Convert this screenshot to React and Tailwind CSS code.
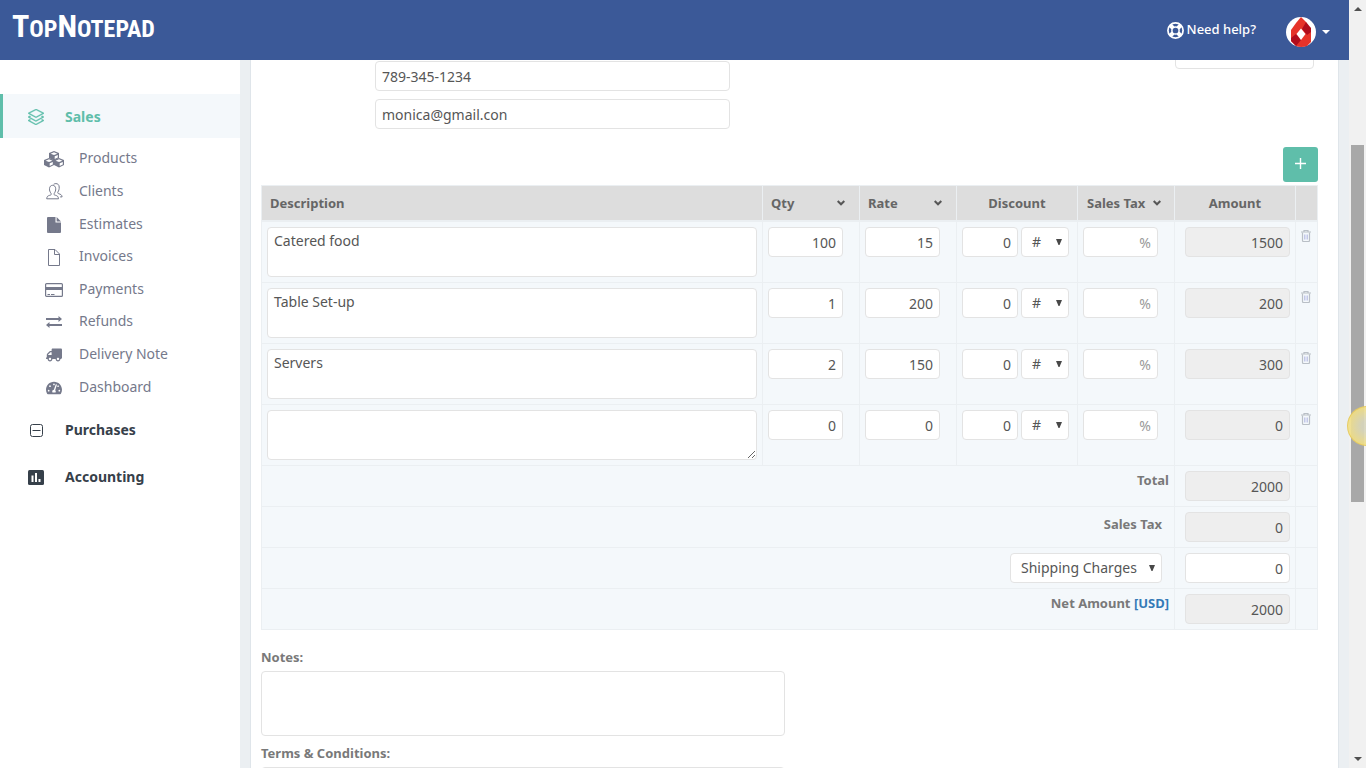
import { FaTruck, FaTachometerAlt } from 'react-icons/fa';
import { SlLayers } from 'react-icons/sl';

const field =
  'block h-[30px] rounded border border-[#e3e3e3] bg-white px-1.5 text-sm text-[#565656] outline-none placeholder:text-[#999]';
const cell = 'border-r border-b border-[#ebeff2] p-[5px] align-top';
const amountCell = 'border-r border-b border-[#ebeff2] py-[5px] pr-[5px] pl-2.5 align-top';
const headCell = 'border-r border-b-2 border-[#ebeff2] px-2 align-middle font-bold';

function CubesIcon() {
  return (
    <svg width="20" height="17" viewBox="0 0 20 17">
      <g fill="currentColor">
        <path d="m10 0 5 2v5l-5 2.500L5 7V2z" />
        <path d="m5 7 5 2v5l-5 2.500L0 14V9z" />
        <path d="m15 7 5 2v5l-5 2.500L10 14V9z" />
      </g>
      <g fill="#fff">
        <path d="m10 1.300 3.400 1.400L10 4 6.600 2.700z" />
        <path d="m5 8.300 3.400 1.400L5 11 1.600 9.700z" />
        <path d="m15 8.300 3.400 1.400L15 11l-3.400-1.300z" />
        <path d="m10.700 5.200 3.100-1.300v2.500l-3.100 1.600z" />
        <path d="m5.700 12.200 3.100-1.300v2.500L5.700 15z" />
        <path d="m15.700 12.200 3.100-1.300v2.500L15.700 15z" />
      </g>
    </svg>
  );
}

function FileIcon() {
  return (
    <svg width="14" height="16" viewBox="0 0 14 16" fill="currentColor">
      <path d="M1 0h7.500v5.500H14V15q0 1-1 1H1q-1 0-1-1V1q0-1 1-1z" />
      <path d="M9.600 0 14 4.400H9.600z" />
    </svg>
  );
}

function UsersIcon() {
  return (
    <svg width="17" height="17" viewBox="0 0 17 17" fill="none" stroke="currentColor" strokeWidth="1">
      <path d="M.7 15.800c.2-2.500 1.200-3 3-3.500 1.500-.3 1.900-.9 1.400-1.800C3.900 8.800 3.400 7.400 3.500 5.700c.1-2.200 1.400-3.400 3.100-3.400s3 1.200 3.100 3.400c.1 1.700-.4 3.100-1.500 4.800-.5.900-.1 1.500 1.300 1.800 1.800.500 2.800 1 3 3.500z" />
      <path d="M7.600 1.300C8.400.8 9.100.6 9.900.6c1.900 0 3.200 1.200 3.300 3.400.1 2.200-.4 3.600-1.300 5-.4.900-.1 1.500 1 1.800 1.800.500 3 1.100 3.200 3.100h-2" />
    </svg>
  );
}

function PageIcon() {
  return (
    <svg width="12" height="17" viewBox="0 0 12 17" fill="none" stroke="currentColor">
      <path d="M.5.5h6.500l4.500 4.500v11.500H.5z" />
      <path d="M6.500.5v5h5" />
    </svg>
  );
}

function CardIcon() {
  return (
    <svg width="18" height="14" viewBox="0 0 18 14" fill="none" stroke="currentColor">
      <rect x=".6" y=".6" width="16.800" height="12.800" rx="1" strokeWidth="1.200" />
      <path d="M0 5.500h18" strokeWidth="3" />
      <path d="M2.500 11.500h2.500M6 11.500h3.500" />
    </svg>
  );
}

function ExchangeIcon() {
  return (
    <svg width="16" height="12" viewBox="0 0 16 12" fill="currentColor">
      <path d="M0 2h12.500V0L16 3l-3.500 3V4H0zM16 8H3.500V6L0 9l3.500 3v-2H16z" />
    </svg>
  );
}

function MinusBoxIcon() {
  return (
    <svg width="13" height="13" viewBox="0 0 13 13" fill="none" stroke="currentColor">
      <rect x=".5" y=".5" width="12" height="12" rx="2" />
      <path d="M2.500 6.500h8" />
    </svg>
  );
}

function StatsIcon() {
  return (
    <svg width="16" height="15" viewBox="0 0 16 15">
      <rect width="16" height="15" rx="1.500" fill="currentColor" />
      <path d="M4.500 12V5.500M8 12V3M11.500 12V9" stroke="#fff" strokeWidth="2" />
    </svg>
  );
}

function HelpIcon() {
  return (
    <svg width="17" height="17" viewBox="0 0 17 17" fill="none" stroke="currentColor">
      <circle cx="8.500" cy="8.500" r="7.600" strokeWidth="1.700" />
      <circle cx="8.500" cy="8.500" r="3.600" strokeWidth="1.500" />
      <path d="m3 3 3 3M14 3l-3 3M3 14l3-3M14 14l-3-3" strokeWidth="4" />
    </svg>
  );
}

function TrashIcon() {
  return (
    <svg width="10" height="12" viewBox="0 0 10 12" fill="none" stroke="currentColor">
      <path d="M0 2h10M3 2V.5h4V2" strokeWidth="1.200" />
      <path d="M1.500 2.500v8q0 1 1 1h5q1 0 1-1v-8" strokeWidth="1.200" />
      <path d="M3.500 4.500v5M5 4.500v5M6.500 4.500v5" stroke="#c3c8e8" />
    </svg>
  );
}

function Chevron() {
  return (
    <svg width="8" height="6" viewBox="0 0 8 6" fill="none" stroke="#565656" strokeWidth="2">
      <path d="M.7 1 4 4.300 7.300 1" />
    </svg>
  );
}

function Avatar() {
  return (
    <svg width="30" height="30" viewBox="0 0 30 30">
      <circle cx="15" cy="15" r="15" fill="#fff" />
      <path d="M15 0l5 5 5 9v11l-4 4q-6 2-11 0l-5-5V13l5-7z" fill="#e63329" />
      <path d="m20 5 5 6v4l-4 3-5-6z" fill="#b00d1c" />
      <path d="m10 17 5 6-5 6-5-5v-3z" fill="#b00d1c" />
      <path d="m15 11.500 4.500 5.500-4.500 6-4.500-6z" fill="#fff" />
    </svg>
  );
}

function Dropdown({ label, options, width }) {
  return (
    <div className={`relative ${width}`}>
      <select aria-label={label} className={`${field} w-full appearance-none pl-2.5`}>
        {options.map((o) => (
          <option key={o}>{o}</option>
        ))}
      </select>
      <svg width="6" height="6" viewBox="0 0 6 6" className="pointer-events-none absolute top-3 right-[7px]">
        <path d="M0 0h6L3.500 6h-1z" fill="#484848" />
      </svg>
    </div>
  );
}

const links = [
  ['Products', <CubesIcon />],
  ['Clients', <UsersIcon />],
  ['Estimates', <FileIcon />],
  ['Invoices', <PageIcon />],
  ['Payments', <CardIcon />],
  ['Refunds', <ExchangeIcon />],
  ['Delivery Note', <FaTruck size={16} className="-scale-x-100" />],
  ['Dashboard', <FaTachometerAlt size={16} />],
];

const items = [
  ['Catered food', '100', '15', '1500'],
  ['Table Set-up', '1', '200', '200'],
  ['Servers', '2', '150', '300'],
  ['', '0', '0', '0'],
];

function Header() {
  return (
    <header className="flex h-[60px] shrink-0 items-center justify-between bg-[#3b5998] pr-[19px] pl-3 text-white">
      <a href="#" className="pb-1.5 font-['Liberation_Sans_Narrow','Roboto_Condensed','Liberation_Sans',sans-serif] text-[32px] leading-9 font-bold">
        T<span className="text-[24px]">OP</span>N<span className="text-[24px]">OTEPAD</span>
      </a>
      <div className="flex items-center gap-[30px]">
        <a href="#" className="flex items-center gap-[3px] text-[13px] font-medium">
          <HelpIcon />
          Need help?
        </a>
        <button type="button" aria-label="Account" className="flex items-center gap-1.5 pt-1">
          <Avatar />
          <svg width="8" height="4" viewBox="0 0 8 4"><path d="M0 0h8L4 4z" fill="#fff" /></svg>
        </button>
      </div>
    </header>
  );
}

function Sidebar() {
  return (
    <nav className="w-60 shrink-0 bg-white pt-[34px] text-sm">
      <a href="#" className="flex h-11 items-center border-l-[3px] border-[#5fbeaa] bg-[#f4f8fb] pt-0.5 pl-[25px] font-bold text-[#5fbeaa]">
        <span className="mr-[21px] flex w-4 justify-center"><SlLayers size={16} strokeWidth={20} stroke="currentColor" /></span>
        Sales
      </a>
      <ul className="mt-1 mb-[5px] grid h-[261px] grid-rows-8 text-[#75798b]">
        {links.map(([name, icon]) => (
          <li key={name}>
            <a href="#" className="flex h-full items-center pl-11">
              <span className="mr-[15px] flex w-5 justify-center pt-0.5">{icon}</span>
              {name}
            </a>
          </li>
        ))}
      </ul>
      <a href="#" className="mb-[3px] flex h-11 items-center pl-7 font-bold text-[#36404a]">
        <span className="mr-[21px] flex w-4 justify-center"><MinusBoxIcon /></span>
        Purchases
      </a>
      <a href="#" className="flex h-11 items-center pl-7 font-bold text-[#36404a]">
        <span className="mr-[21px] flex w-4 justify-center"><StatsIcon /></span>
        Accounting
      </a>
    </nav>
  );
}

function ItemRow({ item: [name, qty, rate, amount], last }) {
  return (
    <tr>
      <td className={cell}>
        <textarea
          aria-label="Description"
          defaultValue={name}
          className={`block h-[50px] w-full rounded border border-[#e3e3e3] bg-white px-1.5 py-[3px] text-sm text-[#565656] ${last ? 'resize' : 'resize-none'}`}
        />
      </td>
      <td className={cell}><input aria-label="Qty" defaultValue={qty} className={`${field} w-[75px] text-right`} /></td>
      <td className={cell}><input aria-label="Rate" defaultValue={rate} className={`${field} w-[75px] text-right`} /></td>
      <td className={cell}>
        <div className="flex gap-[3px]">
          <input aria-label="Discount" defaultValue="0" className={`${field} w-14 text-right`} />
          <Dropdown label="Discount type" options={['#', '%']} width="w-12" />
        </div>
      </td>
      <td className={cell}><input aria-label="Sales Tax" placeholder="%" className={`${field} w-[75px] text-right`} /></td>
      <td className={amountCell}><Amount label="Amount" value={amount} /></td>
      <td className={cell}>
        <button type="button" aria-label="Delete row" className="block pt-[3px] text-[#b9bfc6]"><TrashIcon /></button>
      </td>
    </tr>
  );
}

function Amount({ label, value, editable }) {
  return (
    <input
      aria-label={label}
      defaultValue={value}
      readOnly={!editable}
      className={`block h-[30px] w-full rounded border border-[#e3e3e3] px-1.5 text-right text-sm text-[#565656] ${editable ? 'bg-white' : 'bg-[#eee]'}`}
    />
  );
}

function TotalRow({ label, value, editable, children }) {
  return (
    <tr>
      <td colSpan={5} className={`${cell} text-right font-bold`}>{children}</td>
      <td className={amountCell}><Amount label={label} value={value} editable={editable} /></td>
      <td className={cell} />
    </tr>
  );
}

function ItemTable() {
  return (
    <table className="w-full table-fixed border-separate border-spacing-0 border-t border-l border-[#ebeff2] bg-[#f4f8fb] text-[13px] leading-[18px] text-[#797979]">
      <colgroup>
        <col />
        <col className="w-[97px]" />
        <col className="w-[97px]" />
        <col className="w-[121px]" />
        <col className="w-[97px]" />
        <col className="w-[121px]" />
        <col className="w-[22px]" />
      </colgroup>
      <thead>
        <tr className="h-9 bg-[#ddd] text-left text-[#666]">
          <th className={headCell}>Description</th>
          <th className={headCell}>
            <span className="flex items-center justify-between pr-1.5">Qty <Chevron /></span>
          </th>
          <th className={headCell}>
            <span className="flex items-center justify-between pr-1.5">Rate <Chevron /></span>
          </th>
          <th className={`${headCell} text-center`}>Discount</th>
          <th className={headCell}>
            <span className="flex items-center justify-between pr-[5px] pl-px whitespace-nowrap">Sales Tax <Chevron /></span>
          </th>
          <th className={`${headCell} text-center`}>Amount</th>
          <th className={headCell} aria-label="Actions" />
        </tr>
      </thead>
      <tbody>
        {items.map((item, i) => (
          <ItemRow key={i} item={item} last={i === items.length - 1} />
        ))}
        <TotalRow label="Total" value="2000">Total</TotalRow>
        <TotalRow label="Sales Tax total" value="0">
          <div className="pt-[3px] pr-[7px]">Sales Tax</div>
        </TotalRow>
        <TotalRow label="Shipping amount" value="0" editable>
          <div className="flex justify-end pr-[7px] font-normal">
            <Dropdown label="Charge type" options={['Shipping Charges']} width="w-[152px]" />
          </div>
        </TotalRow>
        <TotalRow label="Net Amount" value="2000">
          Net Amount <a href="#" className="text-[#337ab7]">[USD]</a>
        </TotalRow>
      </tbody>
    </table>
  );
}

function ScrollTrack() {
  return (
    <div className="relative flex w-[17px] shrink-0 flex-col items-center justify-between bg-[#f1f1f1] py-[7px]">
      <svg width="8" height="4" viewBox="0 0 8 4"><path d="M0 4h8L4 0z" fill="#505050" /></svg>
      <svg width="8" height="4" viewBox="0 0 8 4"><path d="M0 0h8L4 4z" fill="#505050" /></svg>
      <div className="absolute top-[145px] left-0.5 h-[357px] w-[13px] bg-[#a8a8a8]" />
      <div className="absolute top-[406px] -left-0.5 h-10 w-10 rounded-full border border-[#e3c75a]/80 bg-radial from-[#d8d6bc]/90 from-20% to-[#f5e07a]/90 to-75%" />
    </div>
  );
}

export default function App() {
  const textarea = 'block h-[65px] w-[524px] max-w-full resize-none rounded border border-[#e3e3e3] bg-white px-1.5 text-sm';
  return (
    <div className="flex h-screen overflow-hidden bg-[#ebeff2] font-['Noto_Sans','Open_Sans',sans-serif] text-[#797979]">
      <div className="flex min-w-0 flex-1 flex-col">
        <Header />
        <div className="flex min-h-0 flex-1">
          <Sidebar />
          <main className="mx-2.5 min-w-0 flex-1 overflow-hidden border-x border-[#dfe5ea] bg-white pr-5 pl-2.5">
            <div className="flex items-start justify-between pt-px pr-1 pl-[114px]">
              <div className="flex flex-col gap-2">
                <input aria-label="Phone" defaultValue="789-345-1234" className={`${field} w-[355px]`} />
                <input aria-label="Email" defaultValue="monica@gmail.con" className={`${field} w-[355px]`} />
              </div>
              <input aria-label="Due date" className={`${field} -mt-[22px] w-[139px]`} />
            </div>
            <div className="flex justify-end pt-[18px] pb-[3px]">
              <button type="button" aria-label="Add row" className="flex size-[35px] items-center justify-center rounded-[3px] bg-[#5fbeaa] pb-0.5">
                <svg width="11" height="11" viewBox="0 0 11 11"><path d="M5.500 0v11M0 5.500h11" stroke="#fff" strokeWidth="1.400" /></svg>
              </button>
            </div>
            <ItemTable />
            <div className="pt-[17px] text-[13px] leading-5">
              <label htmlFor="notes" className="mb-1 block font-bold">Notes:</label>
              <textarea id="notes" className={textarea} />
              <label htmlFor="terms" className="mt-[7px] mb-1 block font-bold">Terms &amp; Conditions:</label>
              <textarea id="terms" className={textarea} />
            </div>
          </main>
        </div>
      </div>
      <ScrollTrack />
    </div>
  );
}
